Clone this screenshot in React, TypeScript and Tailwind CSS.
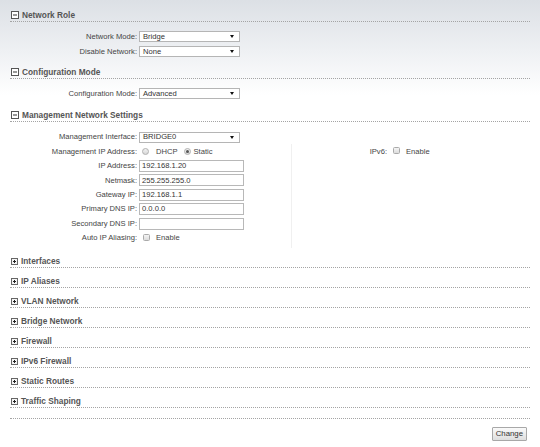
import React from "react";

const font = { fontFamily: '"Liberation Sans", Arial, sans-serif' };

const MinusIcon = () => (
  <svg width="8" height="8" viewBox="0 0 8 8" className="shrink-0">
    <rect x="0.5" y="0.5" width="7" height="7" fill="#fff" stroke="#555" />
    <rect x="2" y="3.5" width="4" height="1" fill="#333" />
  </svg>
);

const PlusIcon = () => (
  <svg width="7" height="7" viewBox="0 0 7 7" className="shrink-0">
    <rect x="0.5" y="0.5" width="6" height="6" fill="#f4f4f4" stroke="#666" />
    <rect x="2" y="3" width="3" height="1" fill="#222" />
    <rect x="3" y="2" width="1" height="3" fill="#222" />
  </svg>
);

const Header = ({ title, open, className }: { title: string; open?: boolean; className: string }) => (
  <div
    className={`flex items-center gap-[3px] h-[13px] pl-[1px] border-b border-dotted border-[#a4a4a4] ${className}`}
  >
    {open ? <MinusIcon /> : <PlusIcon />}
    <span className="text-[8.3px] font-bold text-[#555] leading-none">{title}</span>
  </div>
);

const Select = ({ value }: { value: string }) => (
  <div className="relative flex items-center w-[101px] h-[11px] bg-white border border-[#b5b5b5] pl-[3px] text-[7.6px] text-[#333] leading-none">
    {value}
    <svg width="4" height="3" viewBox="0 0 4 3" className="absolute right-[5px] top-[3px]">
      <path d="M0 0H4L2 3Z" fill="#111" />
    </svg>
  </div>
);

const TextBox = ({ value }: { value: string }) => (
  <div className="flex items-center w-[105px] h-[12px] bg-white border border-[#b8b8b8] pl-[2px] text-[7.6px] text-[#333] leading-none">
    {value}
  </div>
);

const Check = () => (
  <span className="inline-block w-[7px] h-[7px] rounded-[1.5px] border border-[#aaa] bg-[linear-gradient(#f4f4f4,#dcdcdc)]" />
);

const Radio = ({ checked }: { checked?: boolean }) => (
  <span className="flex items-center justify-center w-[7px] h-[7px] rounded-full border border-[#b0b0b0] bg-[linear-gradient(#f2f2f2,#d8d8d8)]">
    {checked && <span className="w-[3px] h-[3px] rounded-full bg-[#555]" />}
  </span>
);

const Row = ({ label, children, h = "h-[15px]" }: { label: string; children: React.ReactNode; h?: string }) => (
  <div className={`flex items-center ${h}`}>
    <div className="w-[127px] text-right text-[7.6px] text-[#444] leading-none">{label}</div>
    <div className="ml-[2px] flex items-center">{children}</div>
  </div>
);

const collapsed = [
  "Interfaces",
  "IP Aliases",
  "VLAN Network",
  "Bridge Network",
  "Firewall",
  "IPv6 Firewall",
  "Static Routes",
  "Traffic Shaping",
];

export default function App() {
  return (
    <div
      style={font}
      className="min-h-screen bg-[linear-gradient(to_bottom,#dce0e5_0px,#eef0f3_50px,#ffffff_95px)] px-[10px] pt-[9px]"
    >
      <Header title="Network Role" open className="" />
      <div className="mt-[7px]">
        <Row label="Network Mode:">
          <Select value="Bridge" />
        </Row>
        <Row label="Disable Network:">
          <Select value="None" />
        </Row>
      </div>

      <Header title="Configuration Mode" open className="mt-[7px]" />
      <div className="mt-[7px]">
        <Row label="Configuration Mode:">
          <Select value="Advanced" />
        </Row>
      </div>

      <Header title="Management Network Settings" open className="mt-[8px]" />
      <div className="mt-[8px]">
        <Row label="Management Interface:" h="h-[14.4px]">
          <Select value="BRIDGE0" />
        </Row>
        <div className="flex">
          <div className="w-[281px] pb-[3px]">
            <Row label="Management IP Address:" h="h-[14.4px]">
              <div className="flex items-center text-[7.6px] text-[#444] leading-none">
                <span className="ml-[3px]"><Radio /></span>
                <span className="ml-[7px]">DHCP</span>
                <span className="ml-[6px]"><Radio checked /></span>
                <span className="ml-[3px]">Static</span>
              </div>
            </Row>
            <Row label="IP Address:" h="h-[14.4px]">
              <TextBox value="192.168.1.20" />
            </Row>
            <Row label="Netmask:" h="h-[14.4px]">
              <TextBox value="255.255.255.0" />
            </Row>
            <Row label="Gateway IP:" h="h-[14.4px]">
              <TextBox value="192.168.1.1" />
            </Row>
            <Row label="Primary DNS IP:" h="h-[14.4px]">
              <TextBox value="0.0.0.0" />
            </Row>
            <Row label="Secondary DNS IP:" h="h-[14.4px]">
              <TextBox value="" />
            </Row>
            <Row label="Auto IP Aliasing:" h="h-[14.4px]">
              <div className="flex items-center text-[7.6px] text-[#444] leading-none">
                <span className="ml-[4px]"><Check /></span>
                <span className="ml-[6px]">Enable</span>
              </div>
            </Row>
          </div>
          <div className="flex-1 border-l border-[#f0f0f0]">
            <div className="flex items-center h-[14.4px] text-[7.6px] text-[#444] leading-none">
              <div className="w-[95px] text-right">IPv6:</div>
              <span className="ml-[6px]"><Check /></span>
              <span className="ml-[6px]">Enable</span>
            </div>
          </div>
        </div>
      </div>

      <div className="mt-[7px] flex flex-col gap-[7px]">
        {collapsed.map((t) => (
          <Header key={t} title={t} className="" />
        ))}
      </div>
      <div className="mt-[10px] border-b border-dotted border-[#a4a4a4]" />

      <div className="flex justify-end mt-[8px] pr-[3px]">
        <button className="h-[14px] px-[3px] border border-[#a8a8a8] rounded-[1px] bg-[linear-gradient(#fafafa,#dedede)] text-[7.8px] text-[#333] leading-none">
          Change
        </button>
      </div>
    </div>
  );
}
